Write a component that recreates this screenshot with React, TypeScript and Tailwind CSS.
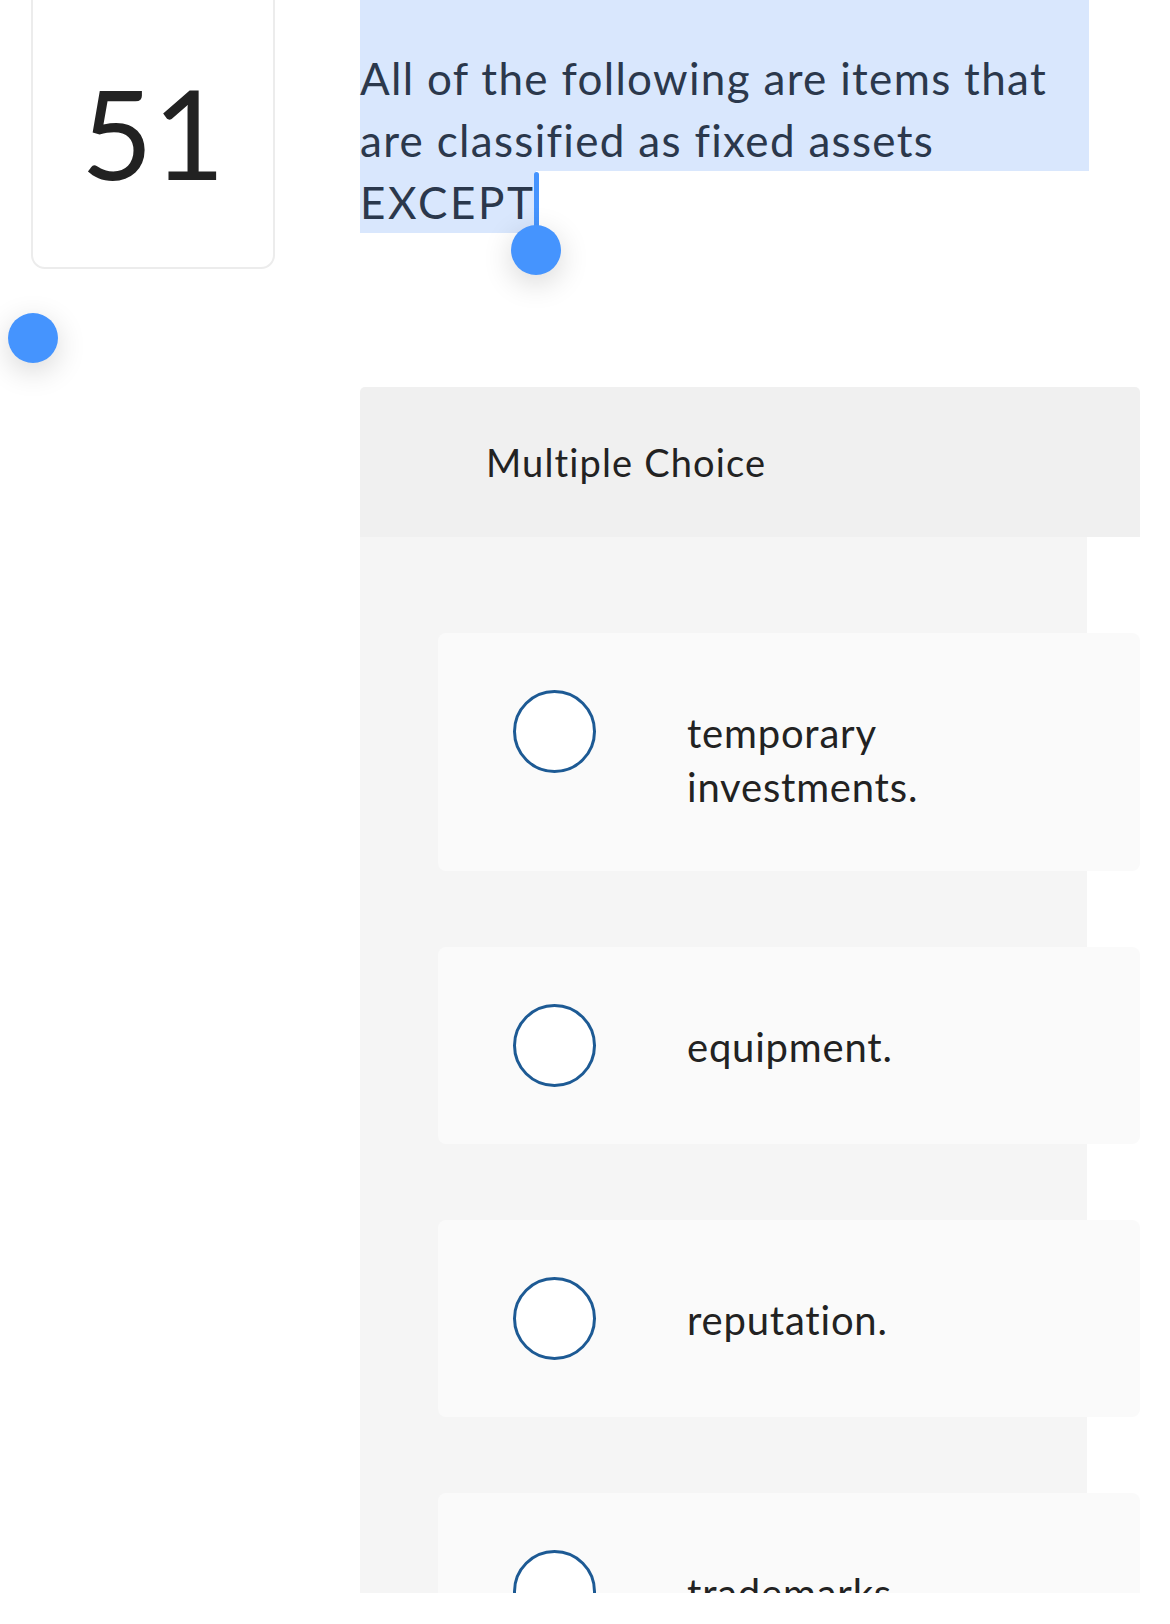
import React from "react";

const options = [
  { id: "a", lines: ["temporary", "investments."] },
  { id: "b", lines: ["equipment."] },
  { id: "c", lines: ["reputation."] },
  { id: "d", lines: ["trademarks."] },
];

function Radio() {
  return (
    <div className="w-[83px] h-[83px] shrink-0 rounded-full border-[3px] border-[#1d5a94] bg-white" />
  );
}

function OptionCard({ lines }: { lines: string[] }) {
  return (
    <label className="flex items-start w-[702px] shrink-0 rounded-[8px] bg-[#fafafa] py-[57px] pl-[75px] cursor-pointer">
      <Radio />
      <span className="ml-[91px] pt-[16px] text-[40px] leading-[54px] tracking-[0.02em] text-[#222222]">
        {lines.map((l, i) => (
          <span key={i} className="block">
            {l}
          </span>
        ))}
      </span>
    </label>
  );
}

export default function App() {
  return (
    <div
      className="relative h-[1593px] overflow-hidden bg-white"
      style={{ fontFamily: "Lato, 'Open Sans', sans-serif" }}
    >
      <div className="flex">
        {/* question number */}
        <div className="w-[360px] shrink-0 pl-[31px]">
          <div className="-mt-[20px] h-[289px] w-[244px] rounded-[14px] border-2 border-[#ececec] bg-white flex justify-center pt-[88px]">
            <span className="text-[124px] leading-none text-[#222222]">51</span>
          </div>
        </div>

        <div className="w-[780px] shrink-0">
          {/* question text, shown selected */}
          <div className="text-[44px] leading-[62px] tracking-[0.03em] text-[#2b384c]">
            <div className="w-[729px] bg-[#d9e7fd] pt-[47px]">
              <div>All of the following are items that</div>
              <div>are classified as fixed assets</div>
            </div>
            <div className="relative w-fit bg-[#d9e7fd] tracking-[0.06em]">
              EXCEPT
              <span className="absolute -right-[3px] top-[1px] h-[56px] w-[5px] rounded-full bg-[#4594fe]" />
              <span className="absolute -right-[25px] top-[54px] h-[50px] w-[50px] rounded-full bg-[#4594fe] shadow-[0_8px_30px_rgba(0,0,0,0.16)]" />
            </div>
          </div>

          {/* multiple choice */}
          <div className="mt-[154px]">
            <div className="flex h-[150px] items-center rounded-t-[5px] bg-[#f0f0f0] pl-[126px]">
              <span className="text-[38px] tracking-[0.03em] text-[#222222]">Multiple Choice</span>
            </div>
            <div className="flex w-[727px] flex-col gap-[76px] bg-[#f5f5f5] pl-[78px] pt-[96px] pb-[76px]">
              {options.map((o) => (
                <OptionCard key={o.id} lines={o.lines} />
              ))}
            </div>
          </div>
        </div>
      </div>

      {/* start selection handle */}
      <span className="absolute left-[8px] top-[313px] h-[50px] w-[50px] rounded-full bg-[#4594fe] shadow-[0_8px_30px_rgba(0,0,0,0.16)]" />
    </div>
  );
}
